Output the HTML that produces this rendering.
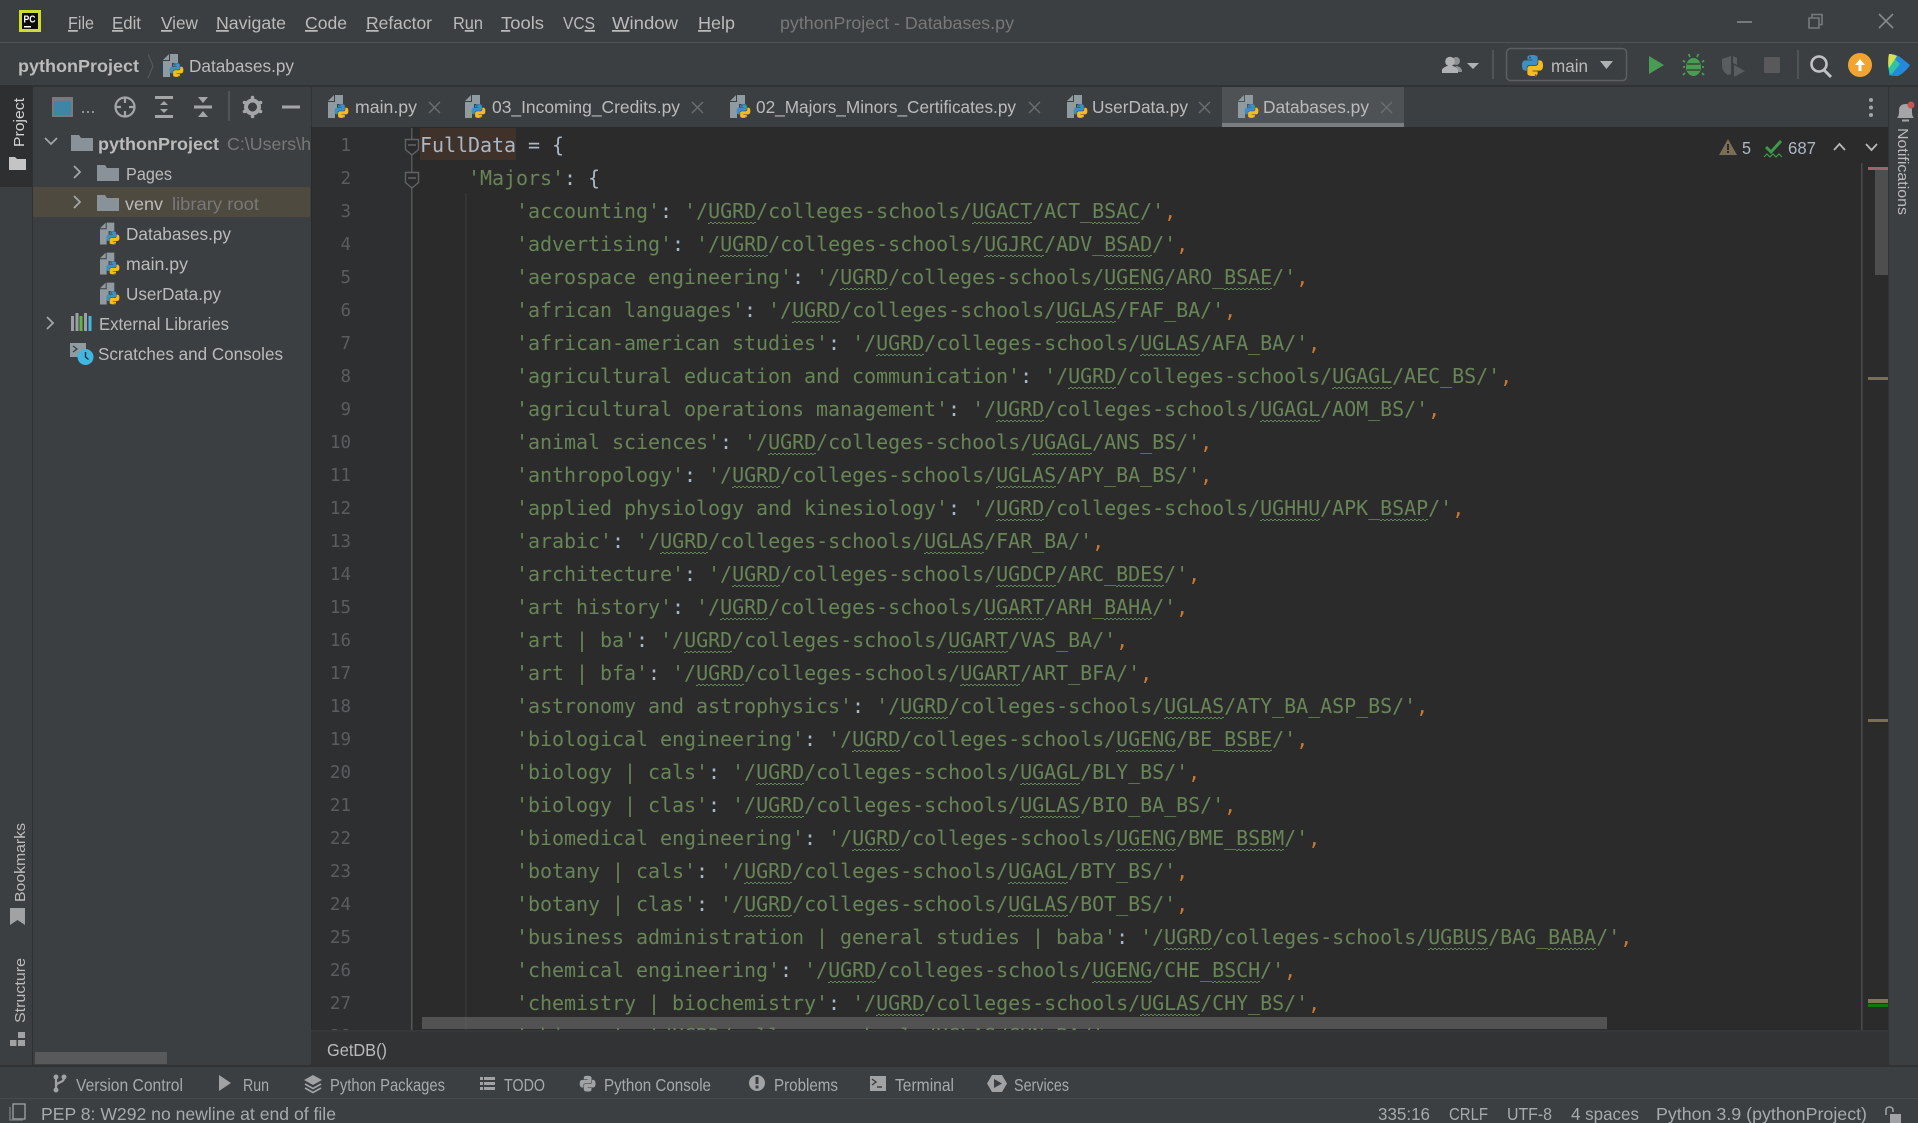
<!DOCTYPE html>
<html lang="en"><head><meta charset="utf-8"><title>pythonProject - Databases.py</title>
<style>
html,body{margin:0;padding:0;background:#3c3f41;width:1918px;height:1123px;overflow:hidden}
svg.base{position:absolute;left:0;top:0}
svg text{font-family:"Liberation Sans",sans-serif;font-size:17.5px;fill:#bbbbbb}
svg text.m{fill:#a7aaac}
svg text.g{fill:#787878}
svg text.w{font-size:15px}
svg tspan.k{text-decoration:underline}
#code,#nums{position:absolute;font-family:"DejaVu Sans Mono","Liberation Mono",monospace;line-height:33px;white-space:pre;overflow:hidden}
#code{left:420px;top:129px;height:901px;width:1441px;font-size:20px;letter-spacing:-.04px;color:#688557}
#nums{left:311px;top:130px;height:900px;width:40px;font-size:17.5px;color:#5a5d60;text-align:right}
#code i{font-style:normal;color:#a9b7c6}
#code b{font-weight:normal;color:#cc7832}
#code u{text-decoration:none;padding-bottom:1px;background-image:repeating-linear-gradient(90deg,#638a5a 0 2px,transparent 2px 4px),repeating-linear-gradient(90deg,transparent 0 2px,#638a5a 2px 4px);background-size:100% 1px;background-position:0 100%,0 calc(100% - 1px);background-repeat:no-repeat}
#code em{font-style:normal;color:#a9b7c6}
.hl{position:absolute;left:420px;top:128px;width:96px;height:32px;background:#3e322b}
.hs{position:absolute;left:422px;top:1017px;width:1185px;height:12px;background:rgba(115,115,115,.55)}
</style></head><body>
<svg class="base" width="1918" height="1123" viewBox="0 0 1918 1123">
<defs>
<symbol id="py" viewBox="0 0 24 24">
<path fill="#3d8fc4" d="M11.9 1C6.4 1 6.7 3.4 6.7 3.4v2.5h5.3v.8H4.6S1 6.3 1 11.9s3.1 5.4 3.1 5.4H6v-2.6s-.1-3.1 3.1-3.1h5.3s3 0 3-2.9V3.9S17.9 1 11.9 1zM9 2.7a1 1 0 110 1.9 1 1 0 010-1.9z"/>
<path fill="#f2bd1d" d="M12.1 23c5.5 0 5.2-2.4 5.2-2.4v-2.5H12v-.8h7.4s3.6.4 3.6-5.2-3.1-5.4-3.1-5.4H18v2.6s.1 3.1-3.1 3.1H9.6s-3 0-3 2.9v4.8S6.1 23 12.1 23zm2.9-1.7a1 1 0 110 1.9 1 1 0 010-1.9z"/>
</symbol>
<symbol id="pf" viewBox="0 0 21 24">
<path fill="#8f9aa1" d="M0 6L6 0v6zM7 0h8v9H9v9H7v5H0V7h7z"/>
<use href="#py" x="6" y="8" width="15" height="16"/>
</symbol>
<symbol id="fd" viewBox="0 0 22 16">
<path fill="#8a9299" d="M0 0h8l2 3h12v13H0z"/>
</symbol>
</defs>

<!-- backgrounds -->
<rect width="1918" height="1123" fill="#3c3f41"/>
<rect y="42" width="1918" height="1" fill="#505356"/>
<rect y="85" width="1918" height="2" fill="#303234"/>
<rect x="32" y="87" width="1" height="980" fill="#2f3133"/>
<rect y="85" width="32" height="102" fill="#2d2f30"/>
<rect x="311" y="87" width="1578" height="40" fill="#3c3f41"/>
<rect x="311" y="87" width="1" height="980" fill="#323436"/>
<rect x="311" y="127" width="1578" height="903" fill="#2b2b2b"/>
<rect x="312" y="127" width="99" height="903" fill="#2e2f30"/>
<rect x="311" y="1030" width="1578" height="2" fill="#353739"/>
<rect x="311" y="1032" width="1578" height="35" fill="#313335"/>
<rect x="1889" y="87" width="29" height="978" fill="#3c3f41"/>
<rect x="1888" y="87" width="1" height="980" fill="#323436"/>
<rect y="1065" width="1918" height="2" fill="#303234"/>
<rect y="1098" width="1918" height="1" fill="#47494b"/>

<!-- logo -->
<rect x="19" y="10" width="22" height="22" fill="#cfdc2c"/>
<rect x="22" y="13" width="16" height="16" fill="#0b0b0b"/>
<text x="23.5" y="22.5" textLength="12" lengthAdjust="spacingAndGlyphs" style="font-size:10px;font-weight:bold;fill:#fff">PC</text>
<rect x="24" y="26" width="7" height="1.5" fill="#fff"/>

<!-- menu -->
<g>
<text x="68" y="29" textLength="26" lengthAdjust="spacingAndGlyphs"><tspan class="k">F</tspan>ile</text>
<text x="112" y="29" textLength="29" lengthAdjust="spacingAndGlyphs"><tspan class="k">E</tspan>dit</text>
<text x="161" y="29" textLength="37" lengthAdjust="spacingAndGlyphs"><tspan class="k">V</tspan>iew</text>
<text x="216" y="29" textLength="70" lengthAdjust="spacingAndGlyphs"><tspan class="k">N</tspan>avigate</text>
<text x="305" y="29" textLength="42" lengthAdjust="spacingAndGlyphs"><tspan class="k">C</tspan>ode</text>
<text x="366" y="29" textLength="66" lengthAdjust="spacingAndGlyphs"><tspan class="k">R</tspan>efactor</text>
<text x="453" y="29" textLength="30" lengthAdjust="spacingAndGlyphs">R<tspan class="k">u</tspan>n</text>
<text x="501" y="29" textLength="43" lengthAdjust="spacingAndGlyphs"><tspan class="k">T</tspan>ools</text>
<text x="563" y="29" textLength="32" lengthAdjust="spacingAndGlyphs">VC<tspan class="k">S</tspan></text>
<text x="612" y="29" textLength="66" lengthAdjust="spacingAndGlyphs"><tspan class="k">W</tspan>indow</text>
<text x="698" y="29" textLength="37" lengthAdjust="spacingAndGlyphs"><tspan class="k">H</tspan>elp</text>
<text class="g" x="780" y="29" textLength="234" lengthAdjust="spacingAndGlyphs">pythonProject - Databases.py</text>
</g>
<!-- window controls -->
<rect x="1737" y="21" width="15" height="2" fill="#777a7c"/>
<path d="M1809 18h10v10h-10zM1812 18v-3.500h10v10h-3" fill="none" stroke="#777a7c" stroke-width="1.600"/>
<path d="M1879 14l14 14M1893 14l-14 14" stroke="#86888a" stroke-width="1.600"/>

<!-- breadcrumb -->
<text x="18" y="72" textLength="121" lengthAdjust="spacingAndGlyphs" style="font-weight:bold">pythonProject</text>
<path d="M148 54l5 12-5 12" fill="none" stroke="#55585a" stroke-width="1.200"/>
<use href="#pf" x="163" y="54" width="21" height="24"/>
<text x="189" y="72" textLength="105" lengthAdjust="spacingAndGlyphs">Databases.py</text>

<!-- right toolbar -->
<g fill="#afb1b3">
<circle cx="1456" cy="61" r="4" fill="#8e9092"/><path fill="#8e9092" d="M1452 70c0-3 3-3 5-4 3 1 5 2 5 6h-10z"/>
<circle cx="1450" cy="61.500" r="4.800"/><path d="M1442 73v-3c0-2 4-3.500 5-4h6c1 .5 5 2 5 4v3z"/>
<path d="M1467 63h12l-6 6z"/>
</g>
<rect x="1492" y="50" width="2" height="29" fill="#515355"/>
<rect x="1506.500" y="48.500" width="120" height="32" rx="4" fill="none" stroke="#5c5f61" stroke-width="1.500"/>
<use href="#py" x="1521" y="54" width="23" height="23"/>
<text x="1551" y="72" textLength="37" lengthAdjust="spacingAndGlyphs">main</text>
<path d="M1600 61h13l-6.500 8z" fill="#afb1b3"/>
<path d="M1649 56l15 9-15 9z" fill="#499c54"/>
<ellipse cx="1693.500" cy="67" rx="7.500" ry="9" fill="#499c54"/>
<path d="M1685 62l-2-1.500M1702 62l2-1.500M1685 67h-2M1702 67h2M1685 73l-2 2M1702 73l2 2M1690 57l-1.500-3M1697 57l1.500-3" stroke="#499c54" stroke-width="1.800" fill="none"/>
<path d="M1687 64h13M1687 70h13" stroke="#34492f" stroke-width="1.600"/>
<path d="M1722 59l9-3v18l-3 1c-4-2-6-6-6-10z" fill="#5a5d5f"/><path d="M1733 56l4 2v7l-4-2z" fill="#5a5d5f"/><path d="M1734 65l11 6-11 6z" fill="#5a5d5f"/>
<rect x="1764" y="57" width="16" height="16" rx="1" fill="#59595b"/>
<rect x="1797" y="50" width="2" height="29" fill="#515355"/>
<circle cx="1819" cy="64" r="7.500" fill="none" stroke="#c0c2c4" stroke-width="2.600"/><path d="M1824 70l7 7" stroke="#c0c2c4" stroke-width="3"/>
<circle cx="1860" cy="65" r="12" fill="#f0a530"/><path d="M1860 59l-5 6h3.500v6h3v-6h3.500z" fill="#fff"/>
<path d="M1889 54c4 0 8 1 11 3l10 8c-3 5-8 9-12 11-3 0-6 0-9-1z" fill="#2488dc"/>
<path d="M1891 55l9 9-9 11c-2-3-3-7-3-11 0-3 1-6 3-9z" fill="#2ec4a4"/>
<path d="M1889 54c3 0 6 1 8 2l-8 12c-1-5-1-10 0-14z" fill="#d8e24e"/>

<!-- left stripe -->
<text class="w" transform="translate(24,147) rotate(-90)" textLength="49" lengthAdjust="spacingAndGlyphs" style="fill:#d4d4d4">Project</text>
<path d="M9 157h6l2 2h9v11H9z" fill="#c4c4c4"/>
<text class="w" transform="translate(25,902) rotate(-90)" textLength="79" lengthAdjust="spacingAndGlyphs">Bookmarks</text>
<path d="M10 908h15v17l-7.500-5-7.500 5z" fill="#a0a2a4"/>
<text class="w" transform="translate(25,1023) rotate(-90)" textLength="65" lengthAdjust="spacingAndGlyphs">Structure</text>
<g fill="#a0a2a4"><rect x="18" y="1032" width="7" height="6"/><rect x="10" y="1040" width="6.500" height="6"/><rect x="18" y="1040" width="7" height="6"/></g>

<!-- project toolbar -->
<rect x="52" y="97" width="21" height="20" fill="#777b7e"/><rect x="54" y="101" width="17" height="14" fill="#3e86a6"/>
<g fill="#8f979e"><rect x="82" y="111" width="2" height="2"/><rect x="87" y="111" width="2" height="2"/><rect x="92" y="111" width="2" height="2"/></g>
<circle cx="125" cy="107" r="9.500" fill="none" stroke="#a3a5a7" stroke-width="2.200"/><path d="M125 97v6M125 111v6M115 107h6M129 107h6" stroke="#a3a5a7" stroke-width="2.200"/>
<g fill="#a3a5a7"><rect x="155" y="96" width="18" height="3"/><rect x="155" y="115" width="18" height="3"/><path d="M160 105l4-4 4 4zM160 109h8l-4 4z"/><rect x="194" y="105.500" width="18" height="3"/><path d="M198 97h10l-5 6zM198 117h10l-5-6z"/></g>
<rect x="228" y="91" width="2" height="30" fill="#515355"/>
<circle cx="252.500" cy="107" r="6.500" fill="none" stroke="#a3a5a7" stroke-width="4"/><circle cx="252.500" cy="97.500" r="1.800" fill="#a3a5a7"/><circle cx="252.500" cy="116.500" r="1.800" fill="#a3a5a7"/><circle cx="244.500" cy="102.500" r="1.800" fill="#a3a5a7"/><circle cx="260.500" cy="102.500" r="1.800" fill="#a3a5a7"/><circle cx="244.500" cy="111.500" r="1.800" fill="#a3a5a7"/><circle cx="260.500" cy="111.500" r="1.800" fill="#a3a5a7"/>
<rect x="282" y="105.500" width="18" height="3" fill="#a3a5a7"/>

<!-- tree -->
<rect x="33" y="187" width="277" height="30" fill="#4e4a3f"/>
<path d="M45 138l6 6 6-6" fill="none" stroke="#a3a5a7" stroke-width="1.800"/>
<use href="#fd" x="71" y="135" width="22" height="16"/>
<text x="98" y="150" textLength="121" lengthAdjust="spacingAndGlyphs" style="font-weight:bold">pythonProject</text>
<text class="g" x="227" y="150" textLength="84" lengthAdjust="spacingAndGlyphs">C:\Users\h</text>
<path d="M74 166l6 6-6 6M74 196l6 6-6 6" fill="none" stroke="#a3a5a7" stroke-width="1.800"/>
<use href="#fd" x="97" y="165" width="22" height="16"/>
<text x="126" y="180" textLength="46" lengthAdjust="spacingAndGlyphs">Pages</text>
<use href="#fd" x="97" y="195" width="22" height="16"/>
<text x="125" y="210" textLength="38" lengthAdjust="spacingAndGlyphs">venv</text>
<text class="g" x="172" y="210" textLength="87" lengthAdjust="spacingAndGlyphs">library root</text>
<use href="#pf" x="100" y="222" width="20" height="24"/>
<text x="126" y="240" textLength="105" lengthAdjust="spacingAndGlyphs">Databases.py</text>
<use href="#pf" x="100" y="252" width="20" height="24"/>
<text x="126" y="270" textLength="62" lengthAdjust="spacingAndGlyphs">main.py</text>
<use href="#pf" x="100" y="282" width="20" height="24"/>
<text x="126" y="300" textLength="95" lengthAdjust="spacingAndGlyphs">UserData.py</text>
<path d="M47 317l6 6-6 6" fill="none" stroke="#a3a5a7" stroke-width="1.800"/>
<g><rect x="71" y="316" width="3" height="15" fill="#9aa0a5"/><rect x="75.500" y="313" width="3" height="18" fill="#9aa0a5"/><rect x="79.500" y="316" width="3" height="15" fill="#62b543"/><rect x="84" y="313" width="3" height="18" fill="#9aa0a5"/><rect x="88.500" y="316" width="3" height="15" fill="#40b6e0"/></g>
<text x="99" y="330" textLength="130" lengthAdjust="spacingAndGlyphs">External Libraries</text>
<rect x="70" y="343" width="16" height="14" fill="#8f9aa1"/><path d="M73 346l4 3-4 3" fill="none" stroke="#3c3f41" stroke-width="1.300"/>
<circle cx="85.500" cy="357" r="8" fill="#40b6e0"/><path d="M85.500 352v5l3 2.500" fill="none" stroke="#2b2b2b" stroke-width="1.400"/>
<text x="98" y="360" textLength="185" lengthAdjust="spacingAndGlyphs">Scratches and Consoles</text>
<rect x="35" y="1052" width="132" height="12" fill="#58595b"/>

<!-- tabs -->
<rect x="1222" y="87" width="182" height="36" fill="#4e5254"/>
<rect x="1222" y="123" width="182" height="4" fill="#7a7e81"/>
<g>
<use href="#pf" x="328" y="95" width="21" height="24"/>
<text x="355" y="113" textLength="62" lengthAdjust="spacingAndGlyphs">main.py</text>
<use href="#pf" x="465" y="95" width="21" height="24"/>
<text x="492" y="113" textLength="188" lengthAdjust="spacingAndGlyphs">03_Incoming_Credits.py</text>
<use href="#pf" x="730" y="95" width="21" height="24"/>
<text x="756" y="113" textLength="260" lengthAdjust="spacingAndGlyphs">02_Majors_Minors_Certificates.py</text>
<use href="#pf" x="1067" y="95" width="21" height="24"/>
<text x="1092" y="113" textLength="96" lengthAdjust="spacingAndGlyphs">UserData.py</text>
<use href="#pf" x="1238" y="95" width="21" height="24"/>
<text x="1263" y="113" textLength="106" lengthAdjust="spacingAndGlyphs">Databases.py</text>
</g>
<path d="M429 102l11 11M440 102l-11 11M692 102l11 11M703 102l-11 11M1029 102l11 11M1040 102l-11 11M1199 102l11 11M1210 102l-11 11M1381 102l11 11M1392 102l-11 11" stroke="#6a6d70" stroke-width="1.500"/>
<circle cx="1871" cy="100" r="2" fill="#a3a5a7"/><circle cx="1871" cy="107.500" r="2" fill="#a3a5a7"/><circle cx="1871" cy="115" r="2" fill="#a3a5a7"/>

<!-- right stripe -->
<path d="M1897 118c2-2 2-4 2-8 0-4 3-6 6.500-6s6.500 2 6.500 6c0 4 0 6 2 8z" fill="#a3a5a7"/><rect x="1902" y="119.500" width="7" height="2" fill="#a3a5a7"/>
<circle cx="1911" cy="105" r="3.500" fill="#c75450"/>
<text class="w" transform="translate(1898,128) rotate(90)" textLength="87" lengthAdjust="spacingAndGlyphs">Notifications</text>

<!-- inspection widget -->
<path d="M1728 139l9 16h-18z" fill="#7a6f56"/><rect x="1727" y="144" width="2" height="6" fill="#2b2b2b"/><rect x="1727" y="151" width="2" height="2" fill="#2b2b2b"/>
<text x="1742" y="154" textLength="9" lengthAdjust="spacingAndGlyphs" style="fill:#a9b7c6">5</text>
<path d="M1766 147l5 5 10-11" fill="none" stroke="#3e9b4a" stroke-width="3"/><path d="M1764 157l3-3 3 3 3-3 3 3 3-3 3 3" fill="none" stroke="#3e9b4a" stroke-width="1.200"/>
<text x="1788" y="154" textLength="28" lengthAdjust="spacingAndGlyphs" style="fill:#a9b7c6">687</text>
<path d="M1834 150l5.500-6 5.500 6M1866 144l5.500 6 5.500-6" fill="none" stroke="#b5b7b9" stroke-width="1.800"/>

<!-- gutter -->
<rect x="411" y="128" width="1.500" height="902" fill="#555759"/>
<rect x="465.500" y="193" width="1" height="837" fill="#3d3d3d"/>
<path d="M405.500 139.500h13v10l-6.500 5.500-6.500-5.500zM405.500 172.500h13v10l-6.500 5.500-6.500-5.500z" fill="#2b2b2b" stroke="#606366" stroke-width="1.400"/>
<path d="M408 145h8M408 178h8" stroke="#606366" stroke-width="1.500"/>

<!-- error stripe -->
<rect x="1861" y="163" width="1.500" height="867" fill="#4a4b4c"/>
<rect x="1875" y="170" width="13" height="105" fill="#4e4e4e"/>
<rect x="1868" y="167" width="20" height="3" fill="#a3606f"/>
<rect x="1868" y="377" width="20" height="3" fill="#7a7150"/>
<rect x="1868" y="719" width="20" height="3" fill="#7a7150"/>
<rect x="1868" y="999" width="20" height="4" fill="#80775c"/>
<rect x="1868" y="1004" width="20" height="3" fill="#0b7a0b"/>

<!-- breadcrumbs bottom -->
<text x="327" y="1056" textLength="60" lengthAdjust="spacingAndGlyphs">GetDB()</text>

<!-- tool window bar -->
<g>
<circle cx="56" cy="1077" r="2.500" fill="#a0a2a4"/><circle cx="56" cy="1090" r="2.500" fill="#a0a2a4"/><circle cx="64" cy="1077" r="2.500" fill="#a0a2a4"/><path d="M56 1077v13M64 1078c0 5-8 4-8 8" fill="none" stroke="#a0a2a4" stroke-width="2.200"/>
<text class="m" x="76" y="1091" textLength="107" lengthAdjust="spacingAndGlyphs">Version Control</text>
<path d="M219 1075l12 8-12 8z" fill="#a0a2a4"/>
<text class="m" x="243" y="1091" textLength="26" lengthAdjust="spacingAndGlyphs">Run</text>
<path d="M313 1075l9 5-9 5-9-5z" fill="#a0a2a4"/><path d="M305 1084l8 4.500 8-4.500M305 1088l8 4.500 8-4.500" fill="none" stroke="#a0a2a4" stroke-width="1.700"/>
<text class="m" x="330" y="1091" textLength="115" lengthAdjust="spacingAndGlyphs">Python Packages</text>
<g fill="#a0a2a4"><rect x="480" y="1077" width="3" height="3"/><rect x="484" y="1077" width="11" height="3"/><rect x="480" y="1082" width="3" height="3"/><rect x="484" y="1082" width="11" height="3"/><rect x="480" y="1087" width="3" height="3"/><rect x="484" y="1087" width="11" height="3"/></g>
<text class="m" x="504" y="1091" textLength="41" lengthAdjust="spacingAndGlyphs">TODO</text>
<g fill="#a0a2a4" transform="translate(579,1075) scale(.72)"><path d="M11.900 1C6.400 1 6.700 3.400 6.700 3.400v2.500h5.300v.8H4.600S1 6.300 1 11.900s3.100 5.400 3.100 5.400H6v-2.600s-.1-3.100 3.100-3.100h5.300s3 0 3-2.900V3.900S17.900 1 11.900 1z"/><path d="M12.100 23c5.500 0 5.200-2.400 5.200-2.400v-2.500H12v-.8h7.400s3.600.4 3.600-5.200-3.100-5.400-3.100-5.400H18v2.600s.1 3.100-3.100 3.100H9.600s-3 0-3 2.900v4.800S6.100 23 12.100 23z"/></g>
<text class="m" x="604" y="1091" textLength="107" lengthAdjust="spacingAndGlyphs">Python Console</text>
<circle cx="757" cy="1083" r="8" fill="#a0a2a4"/><rect x="755.500" y="1077" width="3" height="7" fill="#3c3f41"/><rect x="755.500" y="1085.500" width="3" height="3" fill="#3c3f41"/>
<text class="m" x="774" y="1091" textLength="64" lengthAdjust="spacingAndGlyphs">Problems</text>
<rect x="870" y="1076" width="16" height="15" fill="#a0a2a4"/><path d="M872 1079l4 3-4 3M877 1087h5" fill="none" stroke="#3c3f41" stroke-width="1.400"/>
<text class="m" x="895" y="1091" textLength="59" lengthAdjust="spacingAndGlyphs">Terminal</text>
<path d="M992 1075h10l5 8.500-5 8.500h-10l-5-8.500z" fill="#a0a2a4"/><path d="M994 1079l8 4.500-8 4.500z" fill="#3c3f41"/>
<text class="m" x="1014" y="1091" textLength="55" lengthAdjust="spacingAndGlyphs">Services</text>
</g>

<!-- status bar -->
<rect x="13" y="1104" width="12" height="15" fill="none" stroke="#a0a2a4" stroke-width="1.300"/><path d="M10 1107v13h13" fill="none" stroke="#7d8082" stroke-width="1.300"/>
<text x="41" y="1120" textLength="295" lengthAdjust="spacingAndGlyphs" class="m">PEP 8: W292 no newline at end of file</text>
<text class="m" x="1378" y="1120" textLength="52" lengthAdjust="spacingAndGlyphs">335:16</text>
<text class="m" x="1449" y="1120" textLength="39" lengthAdjust="spacingAndGlyphs">CRLF</text>
<text class="m" x="1507" y="1120" textLength="45" lengthAdjust="spacingAndGlyphs">UTF-8</text>
<text class="m" x="1571" y="1120" textLength="68" lengthAdjust="spacingAndGlyphs">4 spaces</text>
<text class="m" x="1656" y="1120" textLength="211" lengthAdjust="spacingAndGlyphs">Python 3.9 (pythonProject)</text>
<path d="M1886 1115v-5c0-4 7-4 7 0v2" fill="none" stroke="#a0a2a4" stroke-width="1.600"/><rect x="1890" y="1114" width="11" height="9" fill="#a0a2a4"/>
</svg>

<div class="hl"></div>
<div id="nums">1
2
3
4
5
6
7
8
9
10
11
12
13
14
15
16
17
18
19
20
21
22
23
24
25
26
27
28</div>
<div id="code"><em>FullData</em><i> = {</i>
    'Majors'<i>: {</i>
        'accounting'<i>: </i>'/<u>UGRD</u>/colleges-schools/<u>UGACT</u>/ACT_<u>BSAC</u>/'<b>,</b>
        'advertising'<i>: </i>'/<u>UGRD</u>/colleges-schools/<u>UGJRC</u>/ADV_<u>BSAD</u>/'<b>,</b>
        'aerospace engineering'<i>: </i>'/<u>UGRD</u>/colleges-schools/<u>UGENG</u>/ARO_<u>BSAE</u>/'<b>,</b>
        'african languages'<i>: </i>'/<u>UGRD</u>/colleges-schools/<u>UGLAS</u>/FAF_BA/'<b>,</b>
        'african-american studies'<i>: </i>'/<u>UGRD</u>/colleges-schools/<u>UGLAS</u>/AFA_BA/'<b>,</b>
        'agricultural education and communication'<i>: </i>'/<u>UGRD</u>/colleges-schools/<u>UGAGL</u>/AEC_BS/'<b>,</b>
        'agricultural operations management'<i>: </i>'/<u>UGRD</u>/colleges-schools/<u>UGAGL</u>/AOM_BS/'<b>,</b>
        'animal sciences'<i>: </i>'/<u>UGRD</u>/colleges-schools/<u>UGAGL</u>/ANS_BS/'<b>,</b>
        'anthropology'<i>: </i>'/<u>UGRD</u>/colleges-schools/<u>UGLAS</u>/APY_BA_BS/'<b>,</b>
        'applied physiology and kinesiology'<i>: </i>'/<u>UGRD</u>/colleges-schools/<u>UGHHU</u>/APK_<u>BSAP</u>/'<b>,</b>
        'arabic'<i>: </i>'/<u>UGRD</u>/colleges-schools/<u>UGLAS</u>/FAR_BA/'<b>,</b>
        'architecture'<i>: </i>'/<u>UGRD</u>/colleges-schools/<u>UGDCP</u>/ARC_<u>BDES</u>/'<b>,</b>
        'art history'<i>: </i>'/<u>UGRD</u>/colleges-schools/<u>UGART</u>/ARH_<u>BAHA</u>/'<b>,</b>
        'art | ba'<i>: </i>'/<u>UGRD</u>/colleges-schools/<u>UGART</u>/VAS_BA/'<b>,</b>
        'art | bfa'<i>: </i>'/<u>UGRD</u>/colleges-schools/<u>UGART</u>/ART_BFA/'<b>,</b>
        'astronomy and astrophysics'<i>: </i>'/<u>UGRD</u>/colleges-schools/<u>UGLAS</u>/ATY_BA_ASP_BS/'<b>,</b>
        'biological engineering'<i>: </i>'/<u>UGRD</u>/colleges-schools/<u>UGENG</u>/BE_<u>BSBE</u>/'<b>,</b>
        'biology | cals'<i>: </i>'/<u>UGRD</u>/colleges-schools/<u>UGAGL</u>/BLY_BS/'<b>,</b>
        'biology | clas'<i>: </i>'/<u>UGRD</u>/colleges-schools/<u>UGLAS</u>/BIO_BA_BS/'<b>,</b>
        'biomedical engineering'<i>: </i>'/<u>UGRD</u>/colleges-schools/<u>UGENG</u>/BME_<u>BSBM</u>/'<b>,</b>
        'botany | cals'<i>: </i>'/<u>UGRD</u>/colleges-schools/<u>UGAGL</u>/BTY_BS/'<b>,</b>
        'botany | clas'<i>: </i>'/<u>UGRD</u>/colleges-schools/<u>UGLAS</u>/BOT_BS/'<b>,</b>
        'business administration | general studies | baba'<i>: </i>'/<u>UGRD</u>/colleges-schools/<u>UGBUS</u>/BAG_<u>BABA</u>/'<b>,</b>
        'chemical engineering'<i>: </i>'/<u>UGRD</u>/colleges-schools/<u>UGENG</u>/CHE_<u>BSCH</u>/'<b>,</b>
        'chemistry | biochemistry'<i>: </i>'/<u>UGRD</u>/colleges-schools/<u>UGLAS</u>/CHY_BS/'<b>,</b>
        'chinese'<i>: </i>'/<u>UGRD</u>/colleges-schools/<u>UGLAS</u>/CHN_BA/'<b>,</b></div>
<div class="hs"></div>
</body></html>
